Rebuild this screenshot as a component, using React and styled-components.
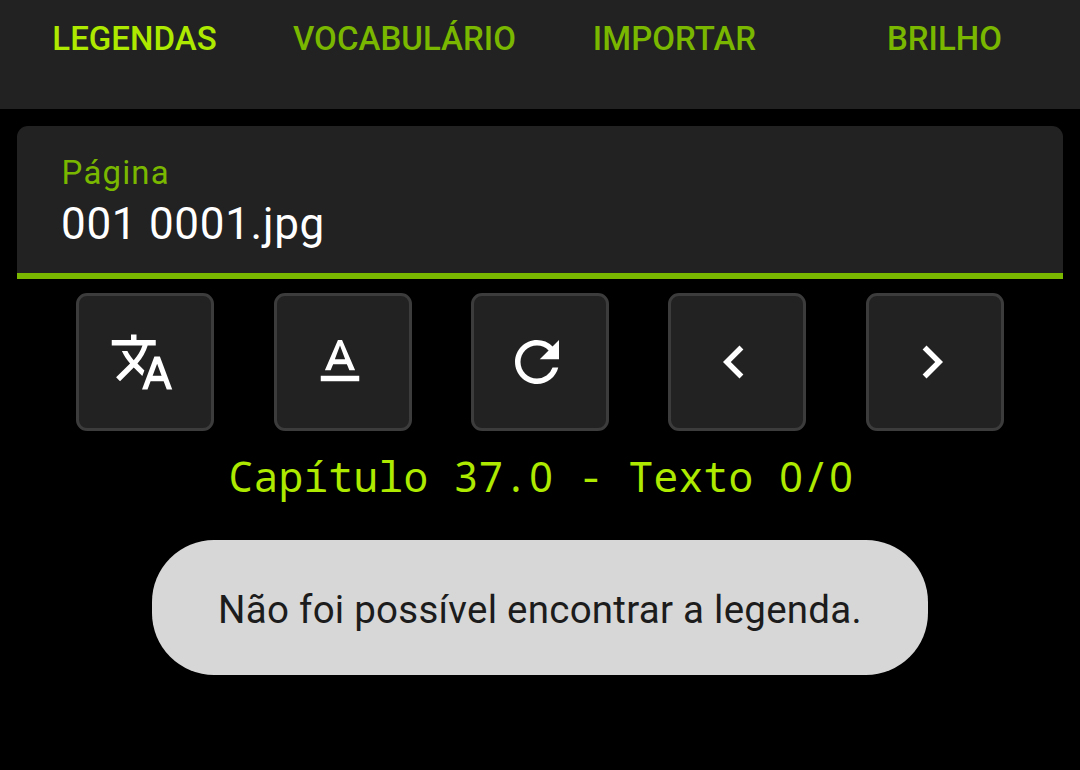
import React from 'react';
import styled, { createGlobalStyle } from 'styled-components';
import { MdTranslate, MdTextFormat, MdRefresh, MdChevronLeft, MdChevronRight } from 'react-icons/md';

const GlobalStyle = createGlobalStyle`
  * { box-sizing: border-box; }
  body { margin: 0; background: #000; font-family: Roboto, sans-serif; }
`;

const Screen = styled.main`
  display: flex;
  flex-direction: column;
  width: 1080px;
  height: 770px;
  overflow: hidden;
  background: #000;
`;

const TabBar = styled.nav`
  display: grid;
  grid-template-columns: repeat(4, 1fr);
  height: 109px;
  padding-top: 19px;
  background: #222;
`;

const Tab = styled.button`
  height: 40px;
  padding: 0 1px 0 0;
  border: 0;
  background: none;
  font: 500 33px/40px Roboto, sans-serif;
  letter-spacing: 0.05px;
  color: ${({ $active }) => ($active ? '#aeea00' : '#79b700')};
`;

const Content = styled.section`
  display: flex;
  flex-direction: column;
  padding: 17px 17px 0;
`;

const PageField = styled.div`
  height: 153px;
  padding: 26px 44px 0;
  border-bottom: 6px solid #79b700;
  border-radius: 11px 11px 0 0;
  background: #222;
`;

const FieldLabel = styled.div`
  padding-left: 0.6px;
  font-size: 33px;
  line-height: 42px;
  letter-spacing: 1.15px;
  color: #79b700;
`;

const FieldValue = styled.div`
  font-size: 44px;
  line-height: 60px;
  letter-spacing: 0.7px;
  color: #fff;
`;

const Actions = styled.div`
  display: flex;
  justify-content: space-evenly;
  margin-top: 14px;
`;

const ActionButton = styled.button`
  display: flex;
  align-items: center;
  justify-content: center;
  width: 138px;
  height: 138px;
  padding: 0 6px 0 0;
  border: 3px solid #3c3c3c;
  border-radius: 11px;
  background: #222;
  color: #fff;

  svg {
    width: 66px;
    height: 66px;
  }
`;

const Chapter = styled.p`
  height: 57px;
  margin: 17px 0 0;
  padding-left: 2px;
  font: 41.25px/57px 'Noto Sans Mono', 'DejaVu Sans Mono', monospace;
  letter-spacing: 0.25px;
  text-align: center;
  white-space: pre;
  color: #aeea00;
`;

/* The proportional face has a plain zero; padding brings it to the monospace pitch. */
const PlainZero = styled.span`
  padding: 0 0.6px 0 0.8px;
  font-family: 'Noto Sans', sans-serif;
  letter-spacing: 0;
`;

const Toast = styled.div`
  align-self: center;
  width: 776px;
  height: 135px;
  margin-top: 35px;
  padding-top: 2px;
  border-radius: 62px;
  background: #d7d7d7;
  font-size: 38.5px;
  line-height: 135px;
  letter-spacing: 0.25px;
  text-align: center;
  white-space: nowrap;
  color: #1c1c1c;
`;

const tabs = ['LEGENDAS', 'VOCABULÁRIO', 'IMPORTAR', 'BRILHO'];

const actions = [
  { label: 'Traduzir', Icon: MdTranslate },
  { label: 'Formatar texto', Icon: MdTextFormat },
  { label: 'Atualizar', Icon: MdRefresh },
  { label: 'Anterior', Icon: MdChevronLeft },
  { label: 'Próximo', Icon: MdChevronRight },
];

export default function App() {
  return (
    <Screen>
      <GlobalStyle />
      <TabBar>
        {tabs.map((tab, i) => (
          <Tab key={tab} $active={i === 0}>{tab}</Tab>
        ))}
      </TabBar>
      <Content>
        <PageField>
          <FieldLabel>Página</FieldLabel>
          <FieldValue>001 0001.jpg</FieldValue>
        </PageField>
        <Actions>
          {actions.map(({ label, Icon }) => (
            <ActionButton key={label} aria-label={label}><Icon /></ActionButton>
          ))}
        </Actions>
        <Chapter>
          Capítulo 37.<PlainZero>0</PlainZero> - Texto <PlainZero>0</PlainZero>/<PlainZero>0</PlainZero>
        </Chapter>
        <Toast>Não foi possível encontrar a legenda.</Toast>
      </Content>
    </Screen>
  );
}
